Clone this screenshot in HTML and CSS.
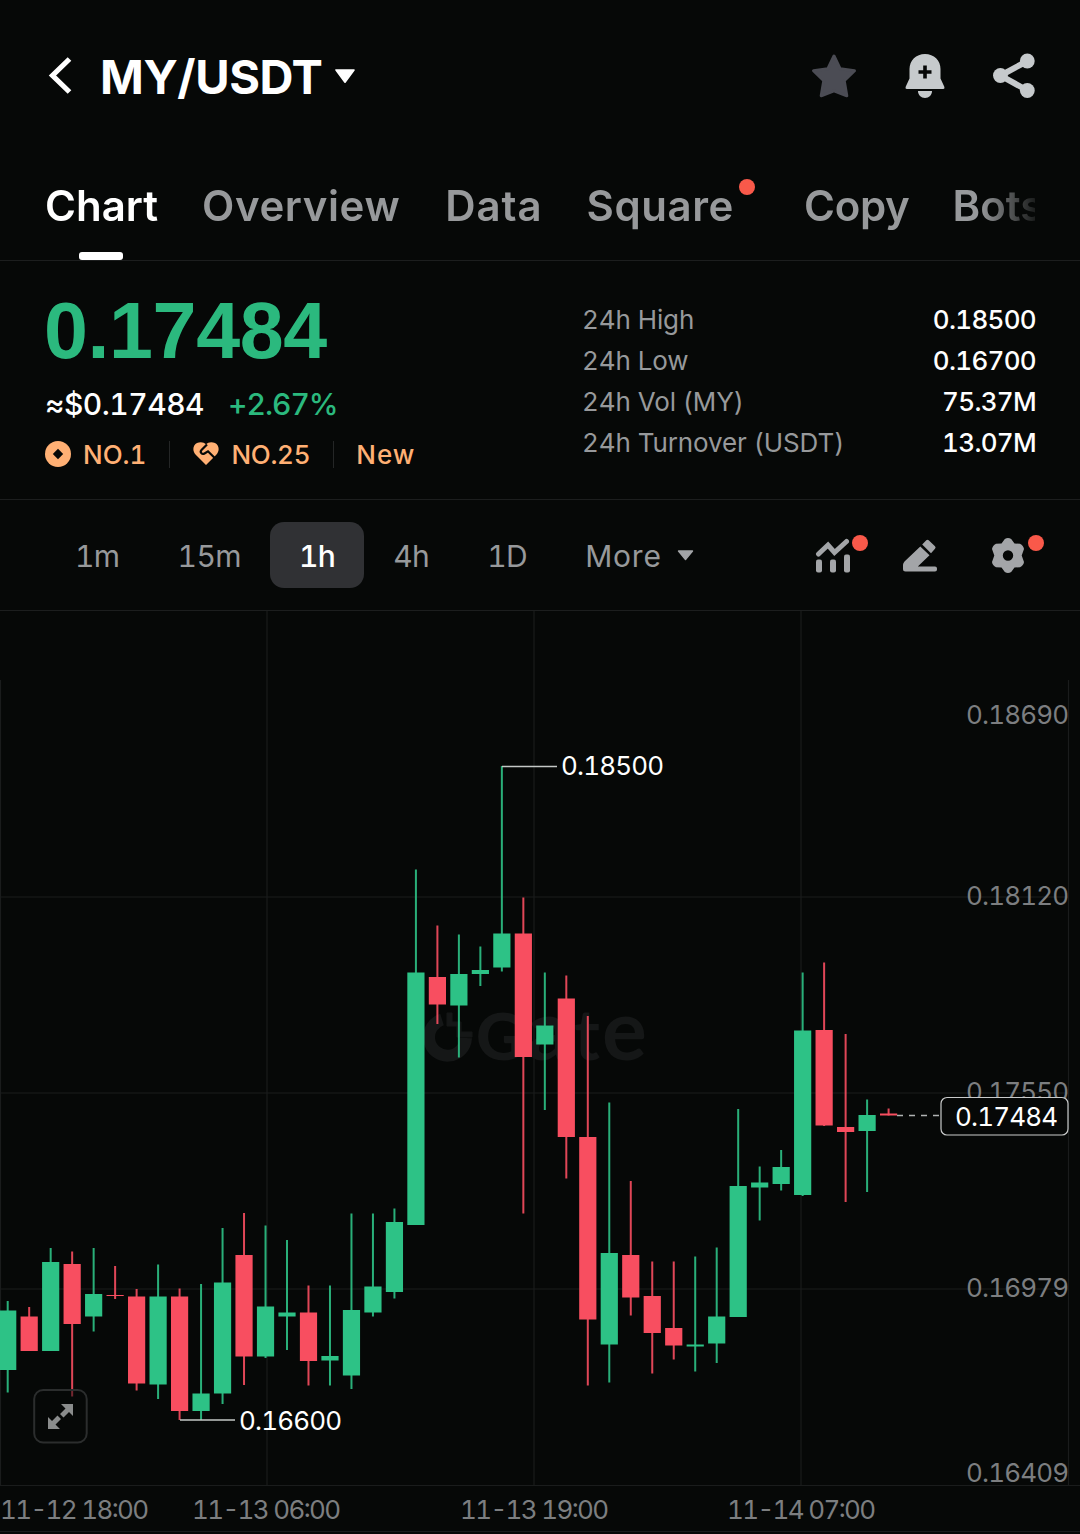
FILE: index.html
```html
<!DOCTYPE html>
<html lang="en">
<head>
    <meta charset="UTF-8">
    <meta name="viewport" content="width=device-width, initial-scale=1.0">
    <title>MY/USDT</title>
    <link rel="stylesheet" href="styles.css">
</head>
<body>
    <header class="header">
        <svg class="back" width="24" height="38" viewBox="0 0 24 38">
            <path d="M21.500 2 4.500 18.500l17 16.500" fill="none" stroke="#fff" stroke-width="5.200"/>
        </svg>
        <h1 class="pair">MY/USDT</h1>
        <svg class="pair-arrow" width="22" height="15" viewBox="0 0 22 15">
            <path d="M2 1h18L11 13.200z" fill="#fff" stroke="#fff" stroke-width="1.600" stroke-linejoin="round"/>
        </svg>
        <div class="header-icons">
            <svg width="46" height="46" viewBox="0 0 46 46">
                <path d="M23 3l6.200 12.800 14.300 1.900-10.300 9.900 2.600 15.200L23 37.800l-12.800 5 2.600-15.200L2.500 17.700l14.300-1.900z" fill="#4b4c54" stroke="#4b4c54" stroke-width="3" stroke-linejoin="round"/>
            </svg>
            <svg width="40" height="46" viewBox="0 0 40 46">
                <path d="M20 1C11 1 4.500 7.500 4.500 16v9.500L.8 33.500q-.8 2.500 1 2.500h36.400q1.800 0 1-2.500l-3.700-8V16C35.500 7.500 29 1 20 1z" fill="#c6cacc"/>
                <path d="M13 38h14c0 4-3 7-7 7s-7-3-7-7z" fill="#c6cacc"/>
                <path d="M20 12.500v13M13.500 19h13" stroke="#060807" stroke-width="3.600"/>
            </svg>
            <svg width="42" height="46" viewBox="0 0 42 46">
                <path d="M34.500 8 7.500 22.500l27 15" fill="none" stroke="#c6cacc" stroke-width="6"/>
                <g fill="#c6cacc">
                    <circle cx="34.300" cy="8" r="7.400"/>
                    <circle cx="7.400" cy="22.500" r="7.400"/>
                    <circle cx="34.300" cy="37.500" r="7.400"/>
                </g>
            </svg>
        </div>
    </header>

    <div class="tabs-wrap">
        <nav class="tabs">
            <a class="tab active">Chart</a>
            <a class="tab overview">Overview</a>
            <a class="tab data">Data</a>
            <a class="tab square">Square<span class="dot"></span></a>
            <a class="tab copy">Copy</a>
            <a class="tab">Bots</a>
        </nav>
    </div>

    <section class="summary">
        <div class="price-box">
            <div class="price">0.17484</div>
            <div class="sub">
                <span class="fiat">≈$0.17484</span>
                <span class="change">+2.67%</span>
            </div>
            <div class="tags">
                <span class="tag">
                    <svg width="26" height="28" viewBox="0 0 26 28">
                        <circle cx="13" cy="13" r="13" fill="#ffb074"/>
                        <path d="M13 7.800l5.200 5.200-5.200 5.200L7.800 13z" fill="#060807"/>
                    </svg>
                    NO.1
                </span>
                <span class="tag tag-heart">
                    <svg width="26" height="26" viewBox="0 0 26 26">
                        <path d="M13 23 2.500 12.500C-1 8.500 0 3 4 1c3.500-1.600 7-.8 9 1.200C15 .2 18.500-.6 22 1c4 2 5 7.500 1.500 11.500z" fill="#ffb074"/>
                        <path d="M14 2.500 8.500 8c-2 2.200.5 5 3 3.500l3.500-2.200 6.500 6.500" fill="none" stroke="#060807" stroke-width="2.200"/>
                    </svg>
                    NO.25
                </span>
                <span class="tag tag-new">New</span>
            </div>
        </div>
        <dl class="stats">
            <div><dt>24h High</dt><dd>0.18500</dd></div>
            <div><dt>24h Low</dt><dd>0.16700</dd></div>
            <div><dt>24h Vol (MY)</dt><dd>75.37M</dd></div>
            <div><dt>24h Turnover (USDT)</dt><dd>13.07M</dd></div>
        </dl>
    </section>

    <div class="toolbar">
        <button class="interval">1m</button>
        <button class="interval">15m</button>
        <button class="interval selected">1h</button>
        <button class="interval">4h</button>
        <button class="interval">1D</button>
        <button class="interval more">More
            <svg width="17" height="11" viewBox="0 0 17 11">
                <path d="M1.500 1h14l-7 8.500z" fill="#a3a5a8" stroke="#a3a5a8" stroke-width="1.400" stroke-linejoin="round"/>
            </svg>
        </button>
        <div class="tools">
            <span class="tool">
                <svg width="36" height="36" viewBox="0 0 36 36">
                    <path d="M4.500 16 14 7l6.500 7.500L32.500 3.500" fill="none" stroke="#a3a5a8" stroke-width="5" stroke-linecap="round"/>
                    <g fill="#a3a5a8">
                        <rect x="2" y="21.500" width="6" height="13" rx="2"/>
                        <rect x="16" y="21.500" width="6" height="13" rx="2"/>
                        <rect x="30" y="16.500" width="6" height="18" rx="2"/>
                    </g>
                </svg>
                <span class="dot"></span>
            </span>
            <span class="tool">
                <svg width="36" height="36" viewBox="0 0 36 36">
                    <g fill="#a3a5a8">
                        <path d="M18.300 8.500 27.500 17.200 15.800 28.500H33q2 0 2 2v1q0 2-2 2H3.500Q1 33.500 1 31V27q0-2 1.500-3.500z"/>
                        <path d="M24.300 2.300q1.200-1.200 2.400 0l6.300 6q1.200 1.200 0 2.400L29 15.200 20.200 6.500z"/>
                    </g>
                </svg>
            </span>
            <span class="tool">
                <svg width="36" height="36" viewBox="0 0 36 36">
                    <path fill="#a3a5a8" fill-rule="evenodd" d="M14.800 1Q18-.8 21.200 1L24.500 5.500l5.500.2Q33.500 7.500 34 11L31.700 17.500l2.300 6.500Q33.500 27.500 30 29.300l-5.500.2-3.300 4.500Q18 35.800 14.800 34L11.500 29.500 6 29.300Q2.500 27.500 2 24L4.300 17.500 2 11Q2.500 7.500 6 5.700l5.500-.2zM18 12.300a5.200 5.200 0 1 0 0 10.400 5.200 5.200 0 0 0 0-10.400z"/>
                </svg>
                <span class="dot"></span>
            </span>
        </div>
    </div>

    <svg class="chart" id="chart" width="1080" height="923" viewBox="0 611 1080 923">
        <g class="grid">
            <path d="M.5 680V1485M267 611V1485M534 611V1485M801 611V1485M1068.500 680V1485"/>
            <path d="M0 897H1068M0 1093H1068M0 1289H1068M0 1485.500H1080M0 1531.500H1080"/>
        </g>

        <g class="watermark">
            <path d="M442 1019.500a18.500 18.500 0 1 0 24 18.500" fill="none" stroke-width="12"/>
            <path d="M447 1013v13h10v11h15v-5h-11v-10h-9v-9z" stroke="none"/>
            <text y="1060"><tspan class="wm-cap" x="476">G</tspan><tspan x="527">a</tspan><tspan class="wm-t" x="574">t</tspan><tspan x="602">e</tspan></text>
        </g>

        <g class="axis">
            <text x="966" y="724" textLength="103">0.18690</text>
            <text x="966" y="905" textLength="103">0.18120</text>
            <text x="966" y="1101" textLength="103">0.17550</text>
            <text x="966" y="1297" textLength="103">0.16979</text>
            <text x="966" y="1482" textLength="103">0.16409</text>
            <text x="0" y="1519" textLength="149">11-12 18:00</text>
            <text x="192" y="1519" textLength="149">11-13 06:00</text>
            <text x="460" y="1519" textLength="149">11-13 19:00</text>
            <text x="727" y="1519" textLength="149">11-14 07:00</text>
        </g>

        <g id="candles"></g>

        <g class="marks">
            <path d="M502 766.500H557M180 1420H235"/>
            <text x="561" y="775" textLength="103">0.18500</text>
            <text x="239" y="1430" textLength="103">0.16600</text>
        </g>

        <g class="last-price">
            <path d="M897 1115.500H941" stroke-dasharray="6 6"/>
            <rect x="941" y="1097.500" width="127" height="37.500" rx="6"/>
            <text x="955" y="1126" textLength="103">0.17484</text>
        </g>

        <g class="expand">
            <rect x="34.200" y="1390" width="52.500" height="52.500" rx="9"/>
            <path d="M61 1404h12v12l-4-4-5.500 5.500-3.500-3.500 5.500-5.500zM48 1417l4 4 5.500-5.500 3.500 3.500-5.500 5.500 4.500 4.500H48z"/>
        </g>
    </svg>

    <script>
        // direction, high, body top, body bottom, low
        const candles = [
            ['up', 1301, 1310.5, 1370, 1392.5],
            ['down', 1307, 1316.5, 1351, 1351],
            ['up', 1248, 1262, 1351, 1351],
            ['down', 1251.5, 1264, 1324, 1396.5],
            ['up', 1248, 1294, 1316.5, 1331.5],
            ['down', 1266, 1295, 1296, 1299],
            ['down', 1289, 1296.5, 1383.5, 1390.5],
            ['up', 1264.5, 1296.5, 1384.5, 1399],
            ['down', 1288.5, 1296.5, 1411, 1420],
            ['up', 1284, 1393.5, 1411, 1420],
            ['up', 1228, 1282.5, 1393.5, 1404],
            ['down', 1213, 1255, 1356.5, 1385],
            ['up', 1225.5, 1306.5, 1356.5, 1358],
            ['up', 1240, 1312.5, 1316.5, 1350],
            ['down', 1285.5, 1312.5, 1361, 1385.5],
            ['up', 1285.5, 1356, 1360.5, 1385.5],
            ['up', 1213.5, 1310, 1375.5, 1389],
            ['up', 1213.5, 1286.5, 1312.5, 1316.5],
            ['up', 1208.5, 1222, 1292, 1298.5],
            ['up', 869.5, 972.5, 1225, 1225],
            ['down', 925.5, 977, 1004.5, 1024],
            ['up', 934.5, 974, 1005.5, 1057.5],
            ['up', 946.5, 970, 974, 986],
            ['up', 766, 933.5, 967.5, 971.5],
            ['down', 897.5, 933.5, 1057, 1213.5],
            ['up', 972.5, 1025.5, 1044.5, 1110],
            ['down', 975.5, 998.5, 1137, 1178.5],
            ['down', 1016, 1137, 1319.5, 1385.5],
            ['up', 1102.5, 1253, 1344.5, 1382.5],
            ['down', 1181, 1255, 1297.5, 1315.5],
            ['down', 1261.5, 1296, 1333, 1373.5],
            ['down', 1261.5, 1328, 1345.5, 1359.5],
            ['up', 1256.5, 1344.5, 1346.5, 1371.5],
            ['up', 1247.5, 1316.5, 1343.5, 1363],
            ['up', 1109, 1186, 1317, 1317],
            ['up', 1166.5, 1182.5, 1187.5, 1220.5],
            ['up', 1150, 1167, 1184, 1190.5],
            ['up', 972.5, 1030.5, 1195, 1196],
            ['down', 962.5, 1030, 1125.5, 1126],
            ['down', 1034, 1127, 1132, 1202],
            ['up', 1099.5, 1115, 1131, 1192],
            ['down', 1108.5, 1113.5, 1115.5, 1115.5]
        ];

        const step = 21.485;
        const bodyWidth = 17.2;

        document.getElementById('candles').innerHTML = candles.map(([dir, high, top, bottom, low], i) => {
            const x = 7.7 + i * step;
            return `<g class="${dir}">
                <rect x="${x - 1}" y="${high}" width="2" height="${low - high}" opacity="0.9"/>
                <rect x="${x - bodyWidth / 2}" y="${top}" width="${bodyWidth}" height="${bottom - top}"/>
            </g>`;
        }).join('');
    </script>
</body>
</html>
```
FILE: styles.css
```css
* {
    margin: 0;
    padding: 0;
    box-sizing: border-box;
}

body {
    width: 1080px;
    background: #060807;
    color: #fff;
    font-family: Inter, 'Liberation Sans', sans-serif;
    font-variant-numeric: tabular-nums;
    overflow: hidden;
}

svg {
    display: block;
    flex: none;
}

.header {
    display: flex;
    align-items: center;
    height: 152px;
    padding: 0 45px 0 48px;
}

.pair {
    margin-left: 28px;
    font-size: 47px;
    font-weight: 700;
    letter-spacing: -0.4px;
}

.pair-arrow {
    margin-left: 11px;
}

.header-icons {
    display: flex;
    align-items: center;
    gap: 48px;
    margin-left: auto;
}

.tabs-wrap {
    height: 109px;
    padding: 0 45px;
    border-bottom: 1px solid #1c1e1e;
}

.tabs {
    display: flex;
    height: 108px;
    overflow: hidden;
    -webkit-mask-image: linear-gradient(to right, #000 935px, transparent 1000px);
    mask-image: linear-gradient(to right, #000 935px, transparent 1000px);
}

.tab {
    position: relative;
    flex: none;
    margin-right: 44px;
    font-size: 42px;
    font-weight: 600;
    line-height: 108px;
    color: #97999b;
}

.tab.active {
    color: #fff;
}

.tab.active::after {
    content: '';
    position: absolute;
    left: 50%;
    bottom: 0;
    width: 44px;
    height: 8px;
    margin-left: -23px;
    border-radius: 3px;
    background: #fff;
}

.tab.overview {
    margin-right: 45px;
    letter-spacing: 0.6px;
}

.tab.data {
    letter-spacing: 0.9px;
}

.tab.square {
    padding-right: 26px;
    letter-spacing: 0.6px;
}

.tab.copy {
    margin-right: 43px;
    letter-spacing: -0.3px;
}

.dot {
    position: absolute;
    width: 16px;
    height: 16px;
    border-radius: 50%;
    background: #f9594a;
}

.tab .dot {
    top: 27px;
    right: 5px;
}

.summary {
    display: flex;
    justify-content: space-between;
    height: 239px;
    padding: 30px 44px 0 45px;
    border-bottom: 1px solid #1c1e1e;
}

.price {
    margin-left: -1px;
    font-family: 'Liberation Sans', sans-serif;
    font-size: 79px;
    font-weight: 700;
    line-height: 79px;
    letter-spacing: -0.4px;
    color: #2bb97e;
}

.sub {
    display: flex;
    gap: 24px;
    font-size: 30px;
    font-weight: 500;
    line-height: 69px;
}

.fiat {
    letter-spacing: -0.5px;
}

.change {
    letter-spacing: -1px;
    color: #2bb97e;
}

.tags {
    display: flex;
    align-items: center;
    height: 31px;
    font-size: 26px;
    font-weight: 500;
    color: #ffb074;
}

.tag {
    display: flex;
    align-items: center;
    gap: 12px;
}

.tag-heart {
    height: 27px;
    margin: 0 22px 0 23px;
    padding: 0 23px;
    border-left: 1px solid #242626;
    border-right: 1px solid #242626;
    letter-spacing: -0.3px;
}

.tag-new {
    letter-spacing: 1px;
}

.stats {
    width: 454px;
    padding-top: 8px;
    font-size: 26px;
    line-height: 41px;
}

.stats div {
    display: flex;
    justify-content: space-between;
}

.stats dt {
    letter-spacing: -0.1px;
    color: #97999b;
}

.stats dd {
    font-weight: 500;
    letter-spacing: -0.7px;
}

.toolbar {
    display: flex;
    align-items: center;
    height: 111px;
    padding: 0 54px 0 46px;
    border-bottom: 1px solid #1c1e1e;
}

.interval {
    height: 66px;
    padding: 1px 29px 0;
    border: none;
    border-radius: 14px;
    background: none;
    font: inherit;
    font-size: 30px;
    letter-spacing: -0.6px;
    color: #97999b;
}

.interval.selected {
    background: #303134;
    color: #fff;
    font-weight: 500;
}

.interval.more {
    display: flex;
    align-items: center;
    gap: 15px;
    letter-spacing: 0.8px;
}

.tools {
    display: flex;
    gap: 52px;
    margin: 1px 0 0 auto;
}

.tool {
    position: relative;
}

.tool .dot {
    top: -3px;
    right: -18px;
}

.grid {
    stroke: #1a1c1c;
    stroke-width: 1.2;
}

.watermark {
    fill: #151717;
    font-family: Lato, sans-serif;
    font-size: 84px;
    font-weight: 700;
}

.watermark path {
    stroke: #151717;
}

.wm-cap {
    font-size: 65px;
    font-weight: 900;
}

.wm-t {
    font-size: 70px;
}

.axis {
    fill: #7c7e80;
    font-size: 26px;
}

.up {
    fill: #2dc286;
}

.down {
    fill: #f84e60;
}

.marks {
    fill: #fff;
    font-size: 26px;
}

.marks path {
    stroke: #c4c8c6;
    stroke-width: 1.5;
}

.last-price {
    fill: #fff;
    font-size: 26px;
}

.last-price path {
    stroke: #b0b2b2;
    stroke-width: 1.5;
}

.last-price rect {
    fill: #060807;
    stroke: #c9cbcb;
    stroke-width: 1.2;
}

.expand rect {
    fill: rgba(6, 8, 7, 0.5);
    stroke: #2b2d2d;
    stroke-width: 2;
}

.expand path {
    fill: #8a8c8c;
}
```
